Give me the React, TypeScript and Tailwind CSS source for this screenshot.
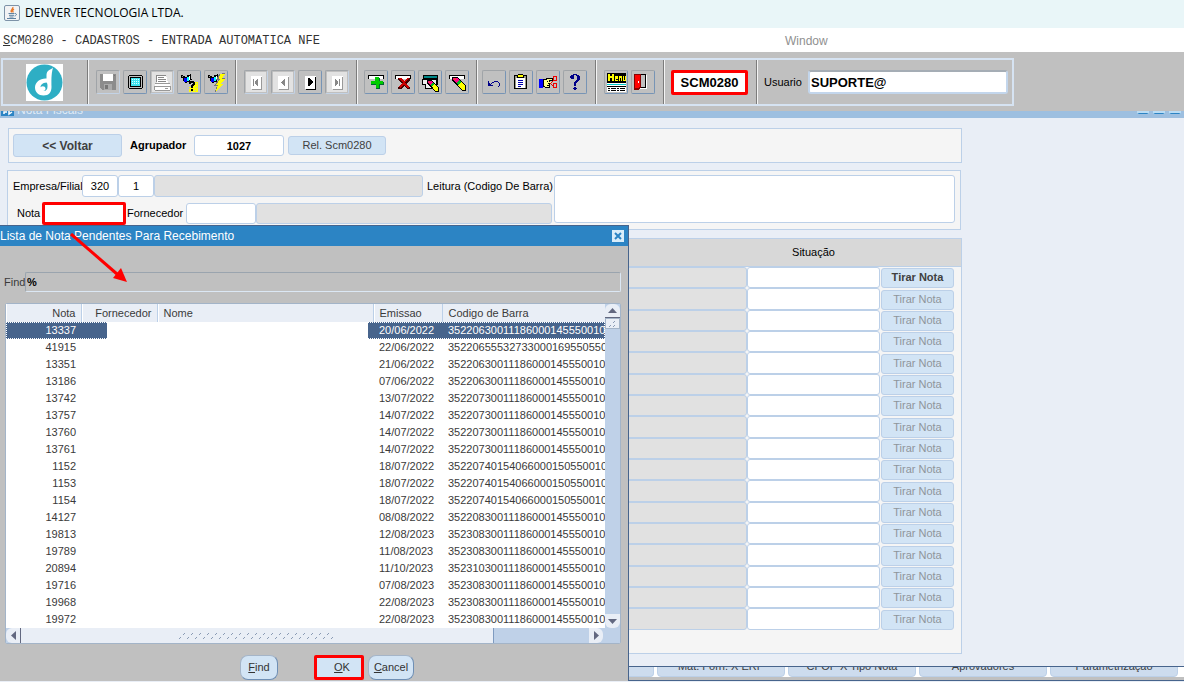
import { useState } from "react";
import type { ReactNode } from "react";

interface NotaPendente {
  nota: string;
  emissao: string;
  codigo: string;
}

interface ToolItem {
  label: string;
  icon: ReactNode;
  disabled?: boolean;
}

const NOTAS: NotaPendente[] = [
  { nota: "13337", emissao: "20/06/2022", codigo: "35220630011186000145550010" },
  { nota: "41915", emissao: "22/06/2022", codigo: "35220655532733000169550550" },
  { nota: "13351", emissao: "21/06/2022", codigo: "35220630011186000145550010" },
  { nota: "13186", emissao: "07/06/2022", codigo: "35220630011186000145550010" },
  { nota: "13742", emissao: "13/07/2022", codigo: "35220730011186000145550010" },
  { nota: "13757", emissao: "14/07/2022", codigo: "35220730011186000145550010" },
  { nota: "13760", emissao: "14/07/2022", codigo: "35220730011186000145550010" },
  { nota: "13761", emissao: "14/07/2022", codigo: "35220730011186000145550010" },
  { nota: "1152", emissao: "18/07/2022", codigo: "35220740154066000150550010" },
  { nota: "1153", emissao: "18/07/2022", codigo: "35220740154066000150550010" },
  { nota: "1154", emissao: "18/07/2022", codigo: "35220740154066000150550010" },
  { nota: "14127", emissao: "08/08/2022", codigo: "35220830011186000145550010" },
  { nota: "19813", emissao: "12/08/2023", codigo: "35230830011186000145550010" },
  { nota: "19789", emissao: "11/08/2023", codigo: "35230830011186000145550010" },
  { nota: "20894", emissao: "11/10/2023", codigo: "35231030011186000145550010" },
  { nota: "19716", emissao: "07/08/2023", codigo: "35230830011186000145550010" },
  { nota: "19968", emissao: "22/08/2023", codigo: "35230830011186000145550010" },
  { nota: "19972", emissao: "22/08/2023", codigo: "35230830011186000145550010" },
];

const GRID_ROWS = Array.from({ length: 17 }, (_, i) => i);
const GRIP_MARKS = Array.from({ length: 20 }, (_, i) => i);

const TABS = ["Mat. Forn. X ERP", "CFOP X Tipo Nota", "Aprovadores", "Parametrização"];

const box = "border border-[#bcd0e8] rounded-[3px] text-black outline-none";
const field = `${box} bg-white`;
const readOnlyField = `${box} bg-[#e1e1e1]`;
const blueButton = "border border-[#bcd0e8] rounded-[3px] bg-[#d2e4f5] text-[#404040] whitespace-nowrap";

function Icon({ children }: { children: ReactNode }) {
  return (
    <svg className="w-6 h-6 block" viewBox="0 0 24 24" shapeRendering="crispEdges">
      {children}
    </svg>
  );
}

function NavIcon({ d, color }: { d: string; color: string }) {
  const off = color !== "#000";
  return (
    <Icon>
      {off && <path d="M2 2h20v20H2z" fill="#e2e2e2" />}
      <path d="M7 6h11v13H7z" fill="#fff" />
      <path d="M17 7h1v13H8v-1h9z" fill={off ? "#999" : "#000"} />
      <path d={d} fill={color} />
    </Icon>
  );
}

// Pencil shared by the "clear" icons
function Pencil() {
  return (
    <>
      <path d="M7 7h5l9 9v5h-4L7 11z" fill="#000" />
      <path d="M8 8h4l2 2-3 3-3-3z" fill="#f08" />
      <path d="M9 8h2v2H9z" fill="#f33" />
      <path d="M11 13l3-3 2 2-3 3z" fill="#0b2" />
      <path d="M13 15l3-3 4 4v4h-3z" fill="#ff0" />
    </>
  );
}

function Torch() {
  return (
    <>
      <path d="M4 5h2v1h2v1h2V5h3V4h1v5h1v1h-2v2h-3v1H8v-2H6V8H4z" fill="#000" />
      <path d="M7 8h3v4H7z" fill="#00f" />
      <path d="M10 7h2v4h-2z" fill="#0ff" />
      <path d="M12 6h1v4h-1z" fill="#fff" />
      <path d="M5 6h1v1H5z" fill="#999" />
    </>
  );
}

const TOOL_GROUPS: ToolItem[][] = [
  [
    {
      label: "Salvar",
      disabled: true,
      icon: (
        <Icon>
          <path d="M4 4h16v16H6l-2-2z" fill="#8c8c8c" />
          <path d="M7 4h10v7H7z" fill="#fff" />
          <path d="M8 14h8v6H8z" fill="#aaa" />
          <path d="M9 15h3v4H9zM18 5h1v1h-1z" fill="#777" />
        </Icon>
      ),
    },
    {
      label: "Tela",
      icon: (
        <Icon>
          <path d="M6 5h13v1h1v12h-1v1H6v-1H5V6h1z" fill="#000" />
          <path d="M6 6h13v12H6z" fill="#c0c0c0" />
          <path d="M7 7h11v10H7z" fill="#000" />
          <path d="M8 8h9v8H8z" fill="#3fe4f0" />
          <path d="M9 9h1v1H9zM11 9h1v1h-1zM13 9h1v1h-1zM15 9h1v1h-1zM9 11h1v1H9zM11 11h1v1h-1zM13 11h1v1h-1zM15 11h1v1h-1zM9 13h1v1H9zM11 13h1v1h-1zM13 13h1v1h-1zM15 13h1v1h-1z" fill="#d8ffff" />
        </Icon>
      ),
    },
    {
      label: "Imprimir",
      disabled: true,
      icon: (
        <Icon>
          <path d="M2 2h20v20H2z" fill="#e2e2e2" />
          <path d="M7 5h9l2 8H7z" fill="#fff" />
          <path d="M8 7h6v1H8zM8 9h8v1H8zM8 11h8v1H8zM6 5h1v7H6zM7 5h9v1H7z" fill="#888" />
          <path d="M5 13h15v3h1v4H4v-4h1z" fill="#fff" />
          <path d="M5 13h15v1H5zM4 16h17v1H4zM5 20h15v1H5zM4 17h1v3H4zM20 17h1v3h-1zM15 18h3v1h-3z" fill="#999" />
        </Icon>
      ),
    },
    {
      label: "Entrar consulta",
      icon: (
        <Icon>
          <path d="M17 12h4v10h-9v-5h3z" fill="#ff0" />
          <path d="M12 18h1v1h-1zM14 21h1v1h-1zM19 13h1v1h-1zM19 17h1v1h-1zM18 20h1v1h-1z" fill="#c0c0c0" />
          <Torch />
          <path d="M12 12h1v-1h4v1h1v3h-1v1h-1v2h-2v-3h1v-1h1v-1h-2v1h-2zM14 19h2v2h-2z" fill="#000" />
        </Icon>
      ),
    },
    {
      label: "Executar consulta",
      icon: (
        <Icon>
          <Torch />
          <path d="M15 4l6-1-3 5h3l-4 6h2l-8 8 2-6h-3l4-6h-2z" fill="#777" />
          <path d="M16 4h5l-3 5h3l-4 5h2l-7 7 2-6h-2l4-6h-1z" fill="#ff0" />
        </Icon>
      ),
    },
  ],
  [
    { label: "Primeiro", disabled: true, icon: <NavIcon color="#888" d="M9 9h1v7H9zM14 9v7h-1v-1h-1v-1h-1v-3h1v-1h1V9z" /> },
    { label: "Anterior", disabled: true, icon: <NavIcon color="#888" d="M14 9v7h-1v-1h-1v-1h-1v-1h-1v-1h1v-1h1v-1h1V9z" /> },
    { label: "Proximo", icon: <NavIcon color="#000" d="M10 8h2v1h1v1h1v1h1v2h-1v1h-1v1h-1v1h-2z" /> },
    { label: "Ultimo", disabled: true, icon: <NavIcon color="#888" d="M10 9h1v1h1v1h1v3h-1v1h-1v1h-1zM14 9h1v7h-1z" /> },
  ],
  [
    {
      label: "Inserir",
      icon: (
        <Icon>
          <path d="M4 5h16v4H4z" fill="#000" />
          <path d="M5 6h14v3H5z" fill="#fff" />
          <path d="M11 8h5v4h4v3h-4v4h-4v-4H7v-3h4z" fill="#063" />
          <path d="M11 7h4v4h4v3h-4v4h-3v-4H7v-3h4z" fill="#0c0" />
        </Icon>
      ),
    },
    {
      label: "Remover",
      icon: (
        <Icon>
          <path d="M4 5h16v4H4z" fill="#000" />
          <path d="M5 6h14v3H5z" fill="#fff" />
          <path d="M7 8h3l3 3 3-3h3v2l-4 4 4 3v2h-3l-3-3-3 3H7v-2l4-3-4-4z" fill="#400" />
          <path d="M8 8h2l3 3 3-3h2l-4 5 4 4-1 1-4-3-4 3-1-2 4-3-4-4z" fill="#c00" />
        </Icon>
      ),
    },
    {
      label: "Limpar bloco",
      icon: (
        <Icon>
          <path d="M5 5h15v10h-2v4H7v-4H4V9h1z" fill="#000" />
          <path d="M6 6h13v2H6z" fill="#088" />
          <path d="M5 10h13v4H5zM8 14h9v4H8z" fill="#eee" />
          <g transform="translate(3 4) scale(.85)">
            <Pencil />
          </g>
        </Icon>
      ),
    },
    {
      label: "Limpar registro",
      icon: (
        <Icon>
          <path d="M4 5h16v4H4z" fill="#000" />
          <path d="M5 6h14v3H5z" fill="#fff" />
          <Pencil />
        </Icon>
      ),
    },
  ],
  [
    {
      label: "Desfazer",
      icon: (
        <Icon>
          <path d="M6 11h1v2h1v1h1v1h2v1H6zM9 13h1v-1h2v-1h4v1h1v1h1v3h-1v1h-1v-1h1v-3h-1v-1h-4v1h-2v1H9z" fill="#008" />
        </Icon>
      ),
    },
    {
      label: "Colar",
      icon: (
        <Icon>
          <path d="M5 5h13v14H5z" fill="#000" />
          <path d="M6 6h11v12H6z" fill="#998" />
          <path d="M7 8h9v10H7z" fill="#fff" />
          <path d="M8 5h1V4h5v1h1v3H8z" fill="#000" />
          <path d="M9 5h5v2H9z" fill="#ff0" />
          <path d="M9 10h5v1H9zM9 12h5v1H9zM9 14h5v1H9zM9 16h3v1H9z" fill="#00a" />
        </Icon>
      ),
    },
    {
      label: "Recortar",
      icon: (
        <Icon>
          <path d="M3 9h4v9H3z" fill="#00f" />
          <path d="M7 9h3V8h7v3h-3v7H9v-1H7z" fill="#000" />
          <path d="M8 10h3V9h5v1h-3v2h2v1h-2v4H9v-1H8z" fill="#ff8" />
          <path d="M11 11h1v1h-1zM12 13h2v1h-2zM11 15h2v1h-2z" fill="#000" />
          <g fill="none" stroke="#e00" strokeWidth="1">
            <path d="M14 13.500l3-2M14 13.500l3 2M17.500 8.500v-2h3v4h-3zM17.500 14.500v3h3v-4h-3z" />
          </g>
        </Icon>
      ),
    },
    {
      label: "Ajuda",
      icon: (
        <Icon>
          <path d="M8 5h2V4h4v1h2v1h1v4h-1v1h-1v1h-1v1h-1v3h-2v-4h1v-1h1v-1h1V6h-1V5h-2v4H8V8H7V6h1zM11 17h2v1h1v1h-1v1h-2v-1h-1v-1h1z" fill="#008" />
        </Icon>
      ),
    },
  ],
  [
    {
      label: "Menu",
      icon: (
        <Icon>
          <path d="M3 3h19v19H3z" fill="#fff" />
          <path d="M3 3h19v10H3z" fill="#000" />
          <path d="M4 11V4h2v2h2V4h2v7H8V8H6v3zM11 6h3v3h-2v1h2v1h-3zM15 6h3v5h-1V8h-1v3h-1zM19 6h1v4h1V6h1v5h-3z" fill="#ff0" />
          <path d="M3 14h19v1H3z" fill="#0cc" />
          <path d="M3 16h19v1H3zM4 18h2v1H4zM7 18h5v1H7zM13 18h2v1h-2zM16 18h5v1h-5zM4 20h2v1H4zM7 20h5v1H7zM13 20h2v1h-2zM16 20h5v1h-5z" fill="#000" />
        </Icon>
      ),
    },
    {
      label: "Sair",
      icon: (
        <Icon>
          <path d="M3 4h12v14H3z" fill="#000" />
          <path d="M8 5h6v12H8z" fill="#c0c0c0" />
          <path d="M3 4h7v13l-3 3H3z" fill="#800" />
          <path d="M4 5h5v12l-2 1H4z" fill="#f00" />
          <path d="M7 11h1v2H7z" fill="#fff" />
          <path d="M15 5h1v14H9v-1h6z" fill="#fff" />
        </Icon>
      ),
    },
  ],
];

function ToolButton({ item }: { item: ToolItem }) {
  return (
    <button
      type="button"
      aria-label={item.label}
      disabled={item.disabled}
      className={`w-6 h-6 shrink-0 rounded-xs border-t border-l border-t-[#a0a4a8] border-l-[#a0a4a8] border-r border-b ${
        item.disabled ? "border-r-[#c3d3e6] border-b-[#c3d3e6]" : "border-r-[#7794b5] border-b-[#7794b5]"
      }`}
    >
      <span className="-m-px block">{item.icon}</span>
    </button>
  );
}

function JavaIcon() {
  return (
    <svg className="w-4 h-4" viewBox="0 0 16 16">
      <rect x=".5" y=".5" width="15" height="15" rx="1.500" fill="#f2f3f4" stroke="#7d93a8" />
      <path d="M8.800 2c1 1.800-3 2.500-1.200 5.300M10 4.200c-1.800.9-1.600 1.500-.7 3.300" fill="none" stroke="#e8792b" strokeWidth="1.300" />
      <path d="M4.500 8.500h6M5 10.300h5M5.500 12h4M3 13.500h9M11 8.500c2.200-.2 1.600 2.200-.4 2.500" fill="none" stroke="#4c7597" strokeWidth=".9" />
    </svg>
  );
}

function Logo() {
  return (
    <svg className="w-[37px] h-[37px]" viewBox="0 0 37 37">
      <path d="M0 0h37v37H0z" fill="#fff" />
      <circle cx="18.500" cy="18.500" r="18" fill="#2eaec4" />
      <path
        d="M27 3.500c-1 1.500-3.500 2-5 3.500-1.300 1.300-1.500 3-1.500 5v2.500c-6-.5-11.500 3.500-11.500 9 0 4.500 3.500 8 8.500 8 5.500 0 8-3.500 8-8.500 0-6-.5-12 1.500-19.500z"
        fill="#fff"
      />
      <path d="M20.500 18.500c-4 .3-6 2.500-6 4.800 1.500-1.500 4.800-1.300 5 1.200.1 1.500-1 2.300-2.200 2.500 2.700.3 4.200-1.500 4.200-4.500 0-1.500 0-3-1-4z" fill="#2eaec4" />
    </svg>
  );
}

function Toolbar({ usuario, onUsuario }: { usuario: string; onUsuario: (v: string) => void }) {
  const section = "flex items-center border-r border-r-[#7c7c7c] shadow-[1px_0_0_#f4f4f4]";
  return (
    <div className="bg-[#c0c0c0] pt-1.5 pb-[5px] pl-px">
      <div className="flex w-full max-w-[1013px] h-12 border-2 border-[#d6e3f2]">
        <div className={`${section} w-[85px] justify-center pr-0.5`}>
          <Logo />
        </div>
        <div className={`${section} w-[148px] pl-2 gap-[3px]`}>
          {TOOL_GROUPS[0].map((t) => <ToolButton key={t.label} item={t} />)}
        </div>
        <div className={`${section} w-[121px] pl-2 gap-[3px]`}>
          {TOOL_GROUPS[1].map((t) => <ToolButton key={t.label} item={t} />)}
        </div>
        <div className={`${section} w-[120px] pl-[7px] gap-[3px]`}>
          {TOOL_GROUPS[2].map((t) => <ToolButton key={t.label} item={t} />)}
        </div>
        <div className={`${section} w-[119px] pl-[5px] gap-[3px]`}>
          {TOOL_GROUPS[3].map((t) => <ToolButton key={t.label} item={t} />)}
        </div>
        <div className={`${section} w-[68px] pl-2 gap-[3px]`}>
          {TOOL_GROUPS[4].map((t) => <ToolButton key={t.label} item={t} />)}
        </div>
        <div className={`${section} w-[93px] pl-[7px]`}>
          <span className="w-[77px] h-[25px] border-[3px] border-[#f00] rounded-xs bg-white text-black text-[13px] font-bold flex items-center justify-center">
            SCM0280
          </span>
        </div>
        <div className="flex flex-1 items-center pl-[7px] pr-1">
          <label htmlFor="usuario" className="w-11 text-[11px] text-black">
            Usuario
          </label>
          <input
            id="usuario"
            value={usuario}
            onChange={(e) => onUsuario(e.target.value)}
            className="flex-1 min-w-0 h-6 px-px bg-white border-2 border-[#c3d6ec] border-t-[#a5adb5] rounded-[3px] text-[13px] font-bold text-black outline-none"
          />
        </div>
      </div>
    </div>
  );
}

function Arrow({ dir }: { dir: "up" | "down" | "left" | "right" }) {
  const paths = {
    up: "M0 7h9L4.500 2z",
    down: "M0 2h9L4.500 7z",
    left: "M7 0v9L2 4.500z",
    right: "M2 0v9l5-4.500z",
  };
  return (
    <svg className="w-[9px] h-[9px]" viewBox="0 0 9 9">
      <path d={paths[dir]} fill="#626880" />
    </svg>
  );
}

function ListaNotas() {
  const [find, setFind] = useState("%");
  const [selected, setSelected] = useState(0);

  const th = "h-[18px] font-normal border-r border-r-[#bcd0e8] shadow-[inset_1px_0_0_#fff] p-0";
  const dialogButton =
    "h-[25px] rounded-lg border border-[#a5b5c8] border-r-[#6f8fb5] border-b-[#6f8fb5] bg-[#d2e4f5] text-[11px] text-[#333]";

  return (
    <div
      role="dialog"
      aria-label="Lista de Nota Pendentes Para Recebimento"
      className="absolute left-0 top-[107px] bottom-px w-[629px] bg-[#c0c0c0] border-t border-r border-[#47648c] text-[#3a3a3a] flex flex-col"
    >
      <div className="h-5 bg-[#2c84c4] flex items-center justify-between pr-1">
        <h2 className="text-xs text-white">Lista de Nota Pendentes Para Recebimento</h2>
        <button type="button" aria-label="Fechar" className="w-3 h-3 bg-[#d9edfa] flex items-center justify-center">
          <svg className="w-2.5 h-2.5" viewBox="0 0 10 10">
            <path d="M2 2l6 6M8 2L2 8" stroke="#2c84c4" strokeWidth="2" />
          </svg>
        </button>
      </div>

      <div className="flex items-center pt-[26px] pl-1 pr-[7px]">
        <label htmlFor="find" className="w-[21px] text-[11px]">
          Find
        </label>
        <input
          id="find"
          value={find}
          onChange={(e) => setFind(e.target.value)}
          className="flex-1 h-5 px-px bg-transparent border border-t-[#9aa4ae] border-l-[#9aa4ae] border-r-[#dbe7f4] border-b-[#dbe7f4] rounded-xs text-[11px] font-bold text-black outline-none"
        />
      </div>

      <div className="mt-[11px] ml-[5px] mr-[7px] border border-[#a3b4c8] rounded-xs bg-white">
        <div className="flex">
          <div className="relative flex-1 overflow-hidden">
            <table className="w-full table-fixed border-collapse text-[11px]">
              <colgroup>
                <col className="w-[75px]" />
                <col className="w-[76px]" />
                <col />
                <col className="w-[69px]" />
                <col className="w-[163px]" />
              </colgroup>
              <thead>
                <tr className="bg-[#e9eef6]">
                  <th className={`${th} text-right pr-[5px]`}>Nota</th>
                  <th className={`${th} text-right pr-[5px]`}>Fornecedor</th>
                  <th className={`${th} text-left pl-1.5`}>Nome</th>
                  <th className={`${th} text-left pl-1.5`}>Emissao</th>
                  <th className="h-[18px] font-normal text-left p-0 pl-1.5">Codigo de Barra</th>
                </tr>
              </thead>
              <tbody>
                {NOTAS.map((n, i) => (
                  <tr
                    key={n.nota}
                    onClick={() => setSelected(i)}
                    className={
                      i === selected
                        ? "bg-[#47648c] text-white outline-1 outline-dotted outline-white -outline-offset-1"
                        : ""
                    }
                  >
                    <td className="h-[17px] p-0 pr-[5px] text-right">{n.nota}</td>
                    <td className="p-0" />
                    <td className="p-0" />
                    <td className="p-0 pl-1.5">{n.emissao}</td>
                    <td className="p-0 pl-1.5 overflow-hidden">{n.codigo}</td>
                  </tr>
                ))}
              </tbody>
            </table>
            {/* Supplier data stays covered */}
            <div className="absolute left-[101px] right-[237px] top-[18px] bottom-0 bg-white" />
          </div>
          <div className="w-[15px] bg-[#bfd1e8] flex flex-col">
            <button type="button" aria-label="Subir" className="h-3.5 rounded-t-md bg-[#e9eef6] border-b border-[#626880] flex items-center justify-center">
              <Arrow dir="up" />
            </button>
            <span className="h-[11px] bg-[#e9eef6] border border-[#a3b4c8] flex items-center justify-center">
              <svg className="w-2 h-2" viewBox="0 0 8 8">
                <path d="M0 7l2-2M4 3l2-2M4 7l2-2" stroke="#8a9bb5" />
              </svg>
            </span>
            <button type="button" aria-label="Descer" className="mt-auto h-3.5 rounded-b-md bg-[#e9eef6] flex items-center justify-center">
              <Arrow dir="down" />
            </button>
          </div>
        </div>
        <div className="h-[15px] bg-[#bfd1e8] flex pr-[17px]">
          <button type="button" aria-label="Esquerda" className="w-3.5 rounded-l-md bg-[#e9eef6] flex items-center justify-center">
            <Arrow dir="left" />
          </button>
          <span className="w-[474px] bg-[#e9eef6] border-l border-r border-l-[#626880] border-r-[#7f9bc0] flex items-center justify-center">
            <svg className="w-[156px] h-2" viewBox="0 0 156 8">
              {GRIP_MARKS.map((i) => (
                <path key={i} d={`M${i * 8} 7l2-2M${i * 8 + 4} 3l2-2`} stroke="#8a9bb5" />
              ))}
            </svg>
          </span>
          <button type="button" aria-label="Direita" className="ml-auto w-3.5 rounded-r-md bg-[#e9eef6] flex items-center justify-center">
            <Arrow dir="right" />
          </button>
        </div>
      </div>

      <div className="flex items-center pt-[11px] pl-60">
        <button type="button" className={`${dialogButton} w-[38px]`}>
          <u>F</u>ind
        </button>
        <button
          type="button"
          className="ml-9 w-[50px] h-[25px] border-[3px] border-[#f00] rounded-xs bg-[#d2e4f5] text-[11px] text-[#333] pl-1.5"
        >
          <u>O</u>K
        </button>
        <button type="button" className={`${dialogButton} ml-1 w-[46px]`}>
          <u>C</u>ancel
        </button>
      </div>

      {/* Pointer from the Nota field into the list */}
      <svg className="absolute left-[70px] top-[7px] w-[58px] h-[52px] pointer-events-none" viewBox="0 0 58 52">
        <path d="M1 1l46 40" stroke="#f00" strokeWidth="3" />
        <path d="M57 49l-14-4 8-10z" fill="#f00" />
      </svg>
    </div>
  );
}

export default function App() {
  const [usuario, setUsuario] = useState("SUPORTE@");
  const [agrupador, setAgrupador] = useState("1027");

  return (
    <div className="min-h-screen flex flex-col overflow-hidden bg-[#e9eef6] font-['Liberation_Sans',Arial,sans-serif] text-[11px] leading-none text-black">
      <header className="h-7 bg-[#e9f6f8] flex items-center gap-[5px] pl-1 pb-0.5">
        <JavaIcon />
        <h1 className="font-['Open_Sans','Noto_Sans',sans-serif] text-xs leading-4">DENVER TECNOLOGIA LTDA.</h1>
      </header>

      <nav className="h-6 bg-white flex items-center pt-0.5 pl-[3px]">
        <a href="#scm0280" className="w-[782px] font-['Liberation_Mono',monospace] text-xs text-[#333]">
          <u>S</u>CM0280 - CADASTROS - ENTRADA AUTOMATICA NFE
        </a>
        <a href="#window" className="text-xs text-[#909090]">
          Window
        </a>
      </nav>

      <Toolbar usuario={usuario} onUsuario={setUsuario} />

      {/* Child window title, mostly hidden under the toolbar */}
      <div className="h-[7px] overflow-hidden bg-[#9dbfe0] flex items-end justify-between pl-px">
        <div className="flex items-end gap-[3px] pb-0.5">
          <svg className="w-[13px] h-3.5" viewBox="0 0 13 14">
            <path d="M0 0h13v14H0z" fill="#2c84c4" />
            <path d="M3 12v-2h3M8 8v4l3-2" fill="none" stroke="#fff" strokeWidth="1.500" />
          </svg>
          <span className="text-xs leading-3 text-[#dfeaf5]">Nota Fiscais</span>
        </div>
        <div className="flex gap-1 self-start pr-[3px]">
          <span className="w-3 h-[3px] bg-[#b9dcf5] border-x-2 border-[#b9dcf5] border-b border-b-[#2c84c4]" />
          <span className="w-3 h-[3px] bg-[#b9dcf5] border-x-2 border-[#b9dcf5] border-b border-b-[#2c84c4]" />
          <span className="w-3 h-[3px] bg-[#b9dcf5] border-x-2 border-[#b9dcf5] border-b border-b-[#2c84c4]" />
        </div>
      </div>

      <main className="relative flex-1 flex flex-col pt-2.5">
        <section className="ml-2 w-full max-w-[954px] h-[35px] border border-[#bcd0e8] bg-[#f5f5f5] flex items-center pl-1">
          <button type="button" className={`${blueButton} w-[109px] h-[23px] text-xs font-bold`}>
            &lt;&lt; Voltar
          </button>
          <label htmlFor="agrupador" className="ml-2 w-16 text-[11px] font-bold">
            Agrupador
          </label>
          <input
            id="agrupador"
            value={agrupador}
            onChange={(e) => setAgrupador(e.target.value)}
            className={`${field} w-[90px] h-[21px] text-center font-bold`}
          />
          <button type="button" className={`${blueButton} ml-1 w-[98px] h-[19px]`}>
            Rel. Scm0280
          </button>
        </section>

        <section className="mt-[7px] ml-[7px] w-full max-w-[954px] h-[60px] border border-[#bcd0e8] bg-[#f5f5f5] flex items-start pt-1 pl-[5px] pr-[5px]">
          <div className="w-[541px] flex flex-col gap-[5px]">
            <div className="flex items-center">
              <label htmlFor="empresa" className="w-[69px] whitespace-nowrap">
                Empresa/Filial
              </label>
              <input id="empresa" defaultValue="320" className={`${field} w-9 h-[22px] text-center`} />
              <input aria-label="Filial" defaultValue="1" className={`${field} w-9 h-[22px] text-center`} />
              <input aria-label="Nome da empresa" readOnly className={`${readOnlyField} w-[269px] h-[22px]`} />
              <label htmlFor="leitura" className="ml-1 whitespace-nowrap">
                Leitura (Codigo De Barra)
              </label>
            </div>
            <div className="flex items-center">
              <label htmlFor="nota" className="ml-1 w-[25px]">
                Nota
              </label>
              <input id="nota" className="w-[84px] h-[23px] border-[3px] border-[#f00] rounded-xs bg-white outline-none" />
              <label htmlFor="fornecedor" className="ml-px w-[59px]">
                Fornecedor
              </label>
              <input id="fornecedor" className={`${field} w-[70px] h-[21px]`} />
              <input aria-label="Nome do fornecedor" readOnly className={`${readOnlyField} flex-1 min-w-0 mr-0.5 h-[21px]`} />
            </div>
          </div>
          <textarea id="leitura" className={`${field} flex-1 h-12 resize-none`} />
        </section>

        <section className="mt-2 ml-2 w-full max-w-[954px] h-[416px] border border-[#bcd0e8] bg-[#f5f5f5]">
          <table className="w-full table-fixed border-collapse">
            <colgroup>
              <col />
              <col className="w-[133px]" />
              <col className="w-[81px]" />
            </colgroup>
            <thead>
              <tr className="h-[27px] bg-[#d8d8d8] border-b border-[#bcd0e8]">
                <th className="p-0" />
                <th className="p-0 font-normal">Situação</th>
                <th className="p-0" />
              </tr>
            </thead>
            <tbody>
              {GRID_ROWS.map((i) => (
                <tr key={i}>
                  <td className="p-0">
                    <input
                      aria-label={`Nota ${i + 1}`}
                      readOnly
                      className={`${readOnlyField} block w-full ${i % 3 === 1 ? "h-[22px]" : "h-[21px]"}`}
                    />
                  </td>
                  <td className="p-0">
                    <input
                      aria-label={`Situação ${i + 1}`}
                      className={`${field} block w-full ${i % 3 === 1 ? "h-[22px]" : "h-[21px]"}`}
                    />
                  </td>
                  <td className="p-0 pl-px align-bottom">
                    <button
                      type="button"
                      disabled={i > 0}
                      className={
                        i === 0
                          ? `${blueButton} block w-[73px] h-5 font-bold`
                          : "block w-[73px] h-5 border border-[#bcd0e8] rounded-[3px] bg-[#d2e4f5] text-[#8f959b]"
                      }
                    >
                      Tirar Nota
                    </button>
                  </td>
                </tr>
              ))}
            </tbody>
          </table>
        </section>

        <div className="mt-auto h-[15px] border-t border-b border-[#47648c] bg-[#c0c0c0] mb-px">
          {/* Tab captions are cut by the child window's lower edge */}
          <div className="h-2.5 overflow-hidden bg-white flex items-end gap-[3px] pl-[526px]">
            <span className="w-32 h-2.5 shrink-0 rounded-b-sm bg-[#cddcee] border border-t-0 border-[#bcd0e8]" />
            {TABS.map((t) => (
              <button
                key={t}
                type="button"
                className="w-32 h-5 shrink-0 pb-0.5 rounded-b-sm bg-[#cddcee] border border-[#bcd0e8] text-[#404040]"
              >
                {t}
              </button>
            ))}
          </div>
        </div>

        <ListaNotas />
      </main>
    </div>
  );
}
